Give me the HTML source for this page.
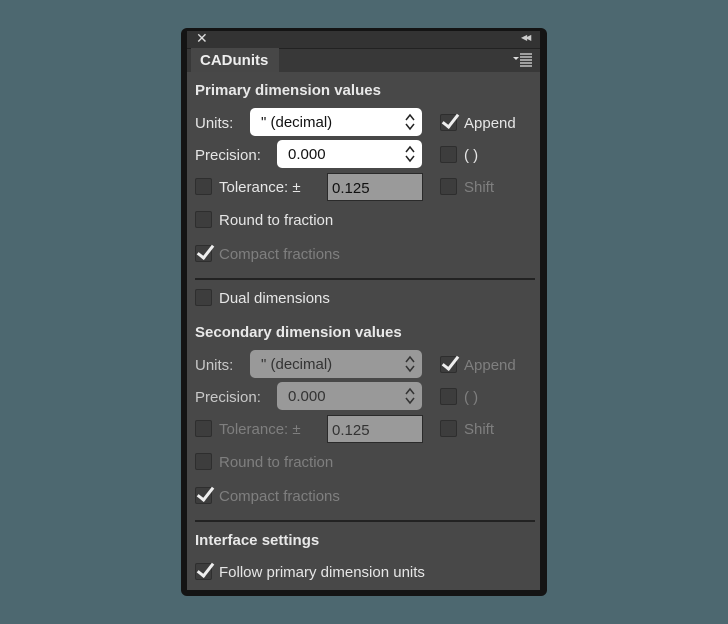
<!DOCTYPE html>
<html><head><style>
*{margin:0;padding:0;box-sizing:border-box}
body{width:728px;height:624px;background:#4d6870;position:relative;overflow:hidden;font-family:"Liberation Sans",sans-serif;font-size:15px;color:#e6e6e6}
.a{position:absolute}
.panel{left:181px;top:28px;width:366px;height:568px;background:#141414;border-radius:6px}
.top{left:187px;top:31px;width:353px;height:17px;background:#333}
.tabbar{left:187px;top:48px;width:353px;height:24px;background:#383838;border-top:1px solid #222}
.tab{left:191px;top:48px;width:88px;height:24px;background:#474747;font-weight:bold;font-size:15px;padding:4px 0 0 9px;color:#eee}
.content{left:187px;top:72px;width:353px;height:518px;background:#484848}
.h{font-weight:bold;color:#e8e8e8;font-size:15px}
.cb{width:17px;height:17px;background:#3d3d3d;border:1px solid #2e2e2e;border-radius:2px}
.cb.c::after{content:"";position:absolute;left:5px;top:-4px;width:6px;height:14px;border:solid #eee;border-width:0 3px 3px 0;transform:rotate(38deg)}
.dis{color:#7f7f7f}
.sel{background:#fff;border-radius:5px;color:#111;padding:6px 0 0 11px;height:28px}
.sel.d{background:#999;color:#333}
.arr{position:absolute;right:7px;top:4px;width:10px;height:20px}
.inp{background:#9a9a9a;border:1px solid #2a2a2a;color:#111;padding:6px 0 0 4px;height:28px}
.inp.d{color:#333}
.hr{left:195px;width:340px;height:2px;background:#222}
</style></head><body>
<div class="a panel"></div>
<div class="a top"></div>
<div class="a" style="left:196px;top:30px;color:#ddd;font-size:14px">✕</div>
<div class="a" style="left:521px;top:33px;color:#ccc;font-size:8px;letter-spacing:-2px">◀◀</div>
<div class="a tabbar"></div>
<div class="a tab">CADunits</div>
<div class="a" style="left:513px;top:53px;width:20px;height:14px">
<svg width="20" height="14"><path d="M0 4h6l-3 3z" fill="#ddd"/><path d="M7 1h12M7 4h12M7 7h12M7 10h12M7 13h12" stroke="#ddd" stroke-width="1.2"/></svg></div>
<div class="a content"></div>

<div class="a h" style="left:195px;top:82px">Primary dimension values</div>
<div class="a" style="left:195px;top:115px">Units:</div>
<div class="a sel" style="left:250px;top:108px;width:172px">" (decimal)<svg class="arr" viewBox="0 0 10 20"><path d="M1 8l4-5 4 5M1 12l4 5 4-5" stroke="#222" stroke-width="1.5" fill="none"/></svg></div>
<div class="a cb c" style="left:440px;top:114px"></div>
<div class="a" style="left:464px;top:115px">Append</div>
<div class="a" style="left:195px;top:147px">Precision:</div>
<div class="a sel" style="left:277px;top:140px;width:145px">0.000<svg class="arr" viewBox="0 0 10 20"><path d="M1 8l4-5 4 5M1 12l4 5 4-5" stroke="#222" stroke-width="1.5" fill="none"/></svg></div>
<div class="a cb" style="left:440px;top:146px"></div>
<div class="a" style="left:464px;top:147px">( )</div>
<div class="a cb" style="left:195px;top:178px"></div>
<div class="a" style="left:219px;top:179px">Tolerance: ±</div>
<div class="a inp" style="left:327px;top:173px;width:96px">0.125</div>
<div class="a cb" style="left:440px;top:178px"></div>
<div class="a dis" style="left:464px;top:179px">Shift</div>
<div class="a cb" style="left:195px;top:211px"></div>
<div class="a" style="left:219px;top:212px">Round to fraction</div>
<div class="a cb c" style="left:195px;top:245px"></div>
<div class="a dis" style="left:219px;top:246px">Compact fractions</div>
<div class="a hr" style="top:278px"></div>
<div class="a cb" style="left:195px;top:289px"></div>
<div class="a" style="left:219px;top:290px">Dual dimensions</div>

<div class="a h" style="left:195px;top:324px">Secondary dimension values</div>
<div class="a" style="left:195px;top:357px;color:#c8c8c8">Units:</div>
<div class="a sel d" style="left:250px;top:350px;width:172px">" (decimal)<svg class="arr" viewBox="0 0 10 20"><path d="M1 8l4-5 4 5M1 12l4 5 4-5" stroke="#333" stroke-width="1.5" fill="none"/></svg></div>
<div class="a cb c" style="left:440px;top:356px"></div>
<div class="a dis" style="left:464px;top:357px">Append</div>
<div class="a" style="left:195px;top:389px;color:#c8c8c8">Precision:</div>
<div class="a sel d" style="left:277px;top:382px;width:145px">0.000<svg class="arr" viewBox="0 0 10 20"><path d="M1 8l4-5 4 5M1 12l4 5 4-5" stroke="#333" stroke-width="1.5" fill="none"/></svg></div>
<div class="a cb" style="left:440px;top:388px"></div>
<div class="a dis" style="left:464px;top:389px">( )</div>
<div class="a cb" style="left:195px;top:420px"></div>
<div class="a dis" style="left:219px;top:421px">Tolerance: ±</div>
<div class="a inp d" style="left:327px;top:415px;width:96px">0.125</div>
<div class="a cb" style="left:440px;top:420px"></div>
<div class="a dis" style="left:464px;top:421px">Shift</div>
<div class="a cb" style="left:195px;top:453px"></div>
<div class="a dis" style="left:219px;top:454px">Round to fraction</div>
<div class="a cb c" style="left:195px;top:487px"></div>
<div class="a dis" style="left:219px;top:488px">Compact fractions</div>
<div class="a hr" style="top:520px"></div>
<div class="a h" style="left:195px;top:532px">Interface settings</div>
<div class="a cb c" style="left:195px;top:563px"></div>
<div class="a" style="left:219px;top:564px">Follow primary dimension units</div>
</body></html>
